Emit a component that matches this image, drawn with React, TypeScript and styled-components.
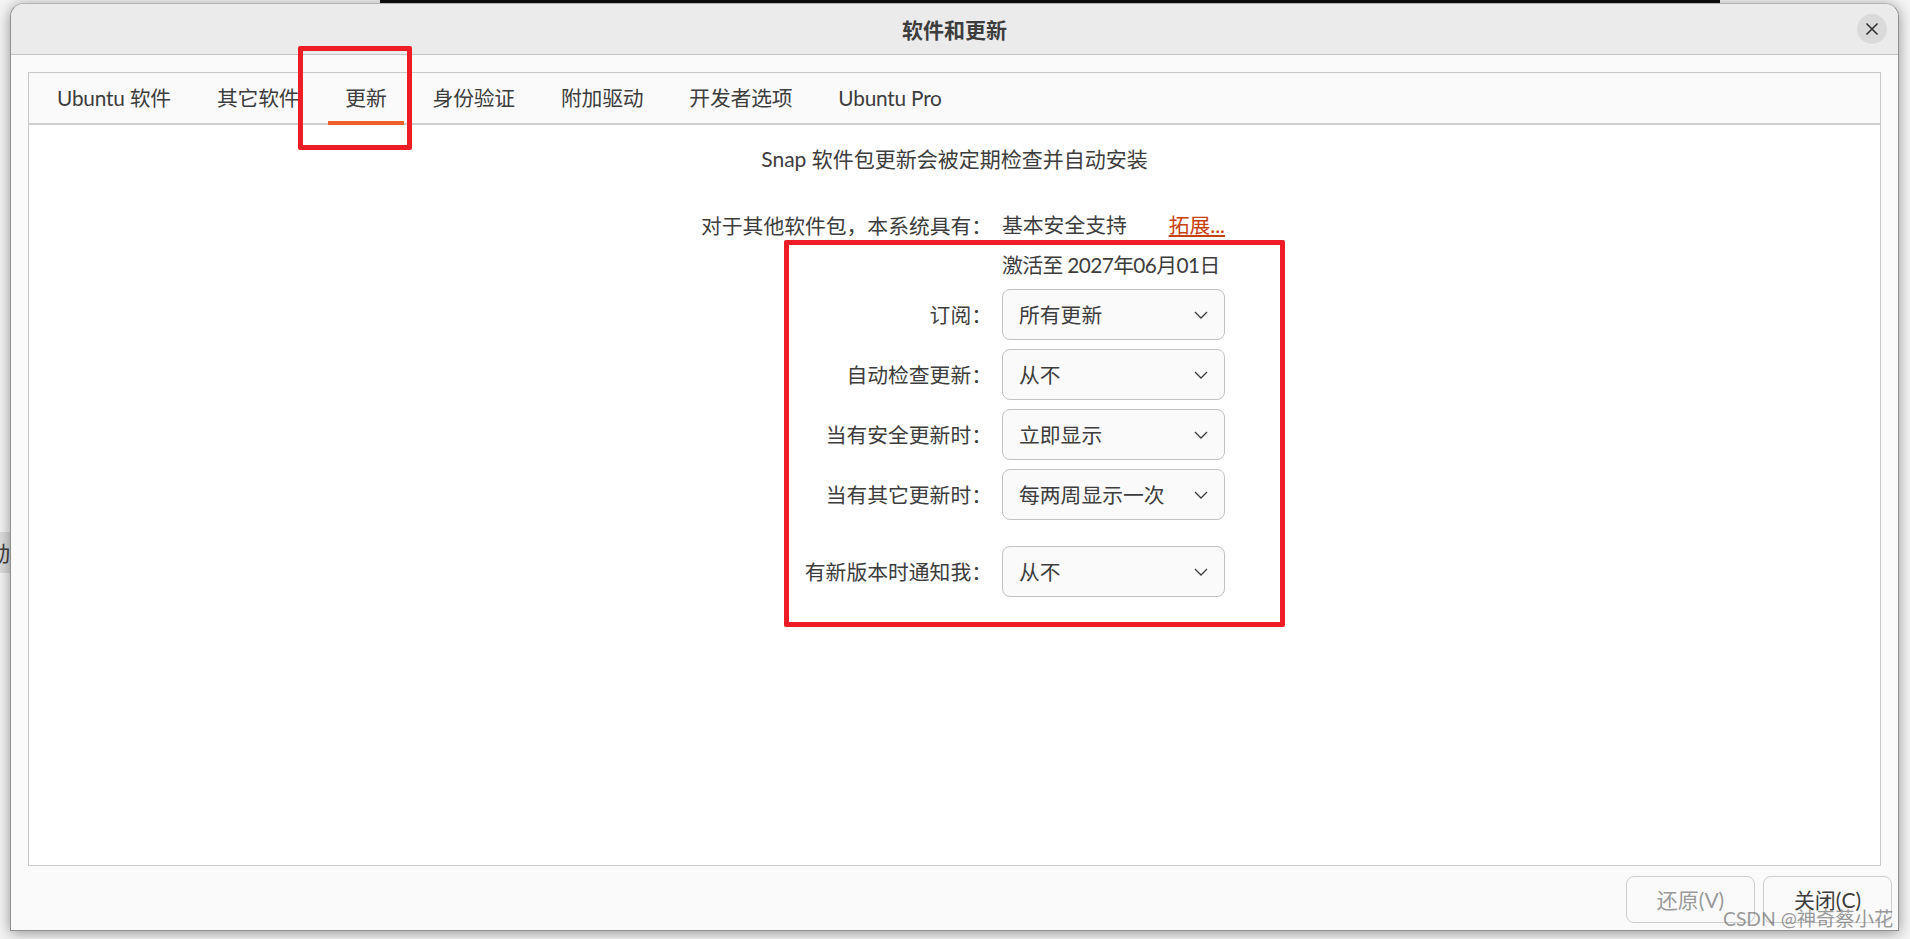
import { Fragment } from "react";
import { createGlobalStyle, styled } from "styled-components";

const FONT = `Lato, "Noto Sans CJK SC", sans-serif`;

const GlobalStyle = createGlobalStyle`
  html, body {
    margin: 0;
    width: 1910px;
    height: 939px;
    overflow: hidden;
    background: #f1f1f1;
    font-family: ${FONT};
  }
`;

const Desktop = styled.div`
  position: relative;
  width: 1910px;
  height: 939px;
  overflow: hidden;
  background: #f4f4f4;
`;

const BehindStrip = styled.div`
  position: absolute;
  left: 380px;
  top: 0;
  width: 1340px;
  height: 4px;
  background: #0c0c0c;
`;

const BehindBand = styled.div`
  position: absolute;
  left: 0;
  top: 532px;
  width: 11px;
  height: 41px;
  background: #dcdcdc;
  font-size: 21px;
  line-height: 41px;
  color: #3d3d3d;
  overflow: hidden;
  text-indent: -11px;
  white-space: nowrap;
`;

const Win = styled.div`
  position: absolute;
  left: 10px;
  top: 3px;
  width: 1889px;
  height: 928px;
  box-sizing: border-box;
  display: flex;
  flex-direction: column;
  background: #fafafa;
  border: 1px solid #8f8f8f;
  border-top-color: #b5b5b5;
  border-radius: 14px 14px 0 0;
  box-shadow: 0 2px 14px rgba(0, 0, 0, 0.4);
  color: #3d3d3d;
`;

const TitleBar = styled.div`
  position: relative;
  flex: none;
  height: 50px;
  display: flex;
  align-items: center;
  justify-content: center;
  background: #ebebeb;
  border-bottom: 1px solid #c4c4c4;
  border-radius: 13px 13px 0 0;
  font-size: 21px;
  font-weight: 700;
`;

const CloseButton = styled.button`
  position: absolute;
  right: 11px;
  top: 10px;
  width: 30px;
  height: 30px;
  padding: 0;
  border: none;
  border-radius: 50%;
  background: #dadada;
  display: flex;
  align-items: center;
  justify-content: center;
  color: #333;
`;

const Notebook = styled.div`
  flex: 1;
  margin: 17px 17px 0 17px;
  display: flex;
  flex-direction: column;
  border: 1px solid #c8c8c8;
  background: #fff;
`;

const TabBar = styled.div`
  flex: none;
  height: 50px;
  padding: 0 5px;
  display: flex;
  background: #fafafa;
  border-bottom: 2px solid #cfcfcf;
`;

const Tab = styled.div<{ $active?: boolean }>`
  position: relative;
  margin: 0 6px -2px;
  padding: 0 17px;
  display: flex;
  align-items: center;
  font-size: 20.8px;
  letter-spacing: -0.2px;
  white-space: nowrap;
  border-bottom: 4px solid ${({ $active }) => ($active ? "#f0602a" : "transparent")};
  box-sizing: border-box;
`;

const Body = styled.div`
  flex: 1;
  display: flex;
  flex-direction: column;
  align-items: center;
  padding-top: 19px;
`;

const Notice = styled.div`
  height: 30px;
  line-height: 30px;
  font-size: 21px;
`;

const FormGrid = styled.div`
  margin-top: 36px;
  padding-left: 17px;
  display: grid;
  grid-template-columns: 291px 223px;
  column-gap: 10px;
  align-items: center;
  font-size: 20.8px;
`;

const Label = styled.div<{ $gap?: boolean }>`
  text-align: right;
  white-space: nowrap;
  padding-bottom: 2px;
  margin-top: ${({ $gap }) => ($gap ? "26px" : "9px")};
`;

const FirstLabel = styled(Label)`
  margin-top: 0;
  padding-bottom: 0;
`;

const PlainValue = styled.div`
  display: flex;
  justify-content: space-between;
  white-space: nowrap;
  height: 30px;
  line-height: 30px;
`;

const ExpiryValue = styled(PlainValue)`
  margin-top: 10px;
  letter-spacing: -0.6px;
`;

const ExpandLink = styled.a`
  color: #c7410f;
  text-decoration: underline;
`;

const Combo = styled.div<{ $gap?: boolean }>`
  box-sizing: border-box;
  height: 51px;
  margin-top: ${({ $gap }) => ($gap ? "26px" : "9px")};
  padding: 0 15px 0 16px;
  display: flex;
  align-items: center;
  justify-content: space-between;
  border: 1px solid #c2c2c2;
  border-radius: 8px;
  background: #fafafa;
  white-space: nowrap;
`;

const ComboText = styled.span`
  padding-bottom: 2px;
`;

const Footer = styled.div`
  flex: none;
  height: 64px;
  padding: 10px 6px 0 0;
  box-sizing: border-box;
  display: flex;
  justify-content: flex-end;
  gap: 8px;
`;

const FooterButton = styled.button<{ $disabled?: boolean }>`
  width: 129px;
  height: 47px;
  padding: 0 0 2px;
  border: 1px solid #cdcdcd;
  border-radius: 8px;
  background: #fafafa;
  font-family: ${FONT};
  font-size: 21px;
  color: ${({ $disabled }) => ($disabled ? "#9b9b9b" : "#3d3d3d")};
`;

const RedBox = styled.div<{ $x: number; $y: number; $w: number; $h: number }>`
  position: absolute;
  left: ${({ $x }) => $x}px;
  top: ${({ $y }) => $y}px;
  width: ${({ $w }) => $w}px;
  height: ${({ $h }) => $h}px;
  box-sizing: border-box;
  border: 5px solid #ee1c25;
  border-radius: 2px;
`;

const Watermark = styled.div`
  position: absolute;
  left: 1723px;
  top: 906px;
  font-size: 19.3px;
  line-height: 26px;
  white-space: nowrap;
  color: rgba(110, 110, 110, 0.7);
`;

const Chevron = () => (
  <svg width="16" height="10" viewBox="0 0 16 10" fill="none" stroke="#3d3d3d" strokeWidth="1.3">
    <path d="M2 2 L8 8 L14 2" />
  </svg>
);

const tabs = ["Ubuntu 软件", "其它软件", "更新", "身份验证", "附加驱动", "开发者选项", "Ubuntu Pro"];

const rows = [
  { label: "订阅：", value: "所有更新" },
  { label: "自动检查更新：", value: "从不" },
  { label: "当有安全更新时：", value: "立即显示" },
  { label: "当有其它更新时：", value: "每两周显示一次" },
  { label: "有新版本时通知我：", value: "从不", gap: true },
];

export default function App() {
  return (
    <Desktop>
      <GlobalStyle />
      <BehindStrip />
      <BehindBand>动</BehindBand>
      <Win>
        <TitleBar>
          软件和更新
          <CloseButton>
            <svg width="14" height="14" viewBox="0 0 14 14" fill="none" stroke="#333" strokeWidth="1.6">
              <path d="M1.5 1.5 L12.5 12.5 M12.5 1.5 L1.5 12.5" />
            </svg>
          </CloseButton>
        </TitleBar>
        <Notebook>
          <TabBar>
            {tabs.map((t) => (
              <Tab key={t} $active={t === "更新"}>
                {t}
              </Tab>
            ))}
          </TabBar>
          <Body>
            <Notice>Snap 软件包更新会被定期检查并自动安装</Notice>
            <FormGrid>
              <FirstLabel>对于其他软件包，本系统具有：</FirstLabel>
              <PlainValue>
                <span>基本安全支持</span>
                <ExpandLink>拓展...</ExpandLink>
              </PlainValue>
              <span />
              <ExpiryValue>激活至 2027年06月01日</ExpiryValue>
              {rows.map((r) => (
                <Fragment key={r.label}>
                  <Label $gap={r.gap}>{r.label}</Label>
                  <Combo $gap={r.gap}>
                    <ComboText>{r.value}</ComboText>
                    <Chevron />
                  </Combo>
                </Fragment>
              ))}
            </FormGrid>
          </Body>
        </Notebook>
        <Footer>
          <FooterButton $disabled>还原(V)</FooterButton>
          <FooterButton>关闭(C)</FooterButton>
        </Footer>
      </Win>
      <RedBox $x={298} $y={46} $w={114} $h={104} />
      <RedBox $x={784} $y={240} $w={501} $h={387} />
      <Watermark>CSDN @神奇蔡小花</Watermark>
    </Desktop>
  );
}
